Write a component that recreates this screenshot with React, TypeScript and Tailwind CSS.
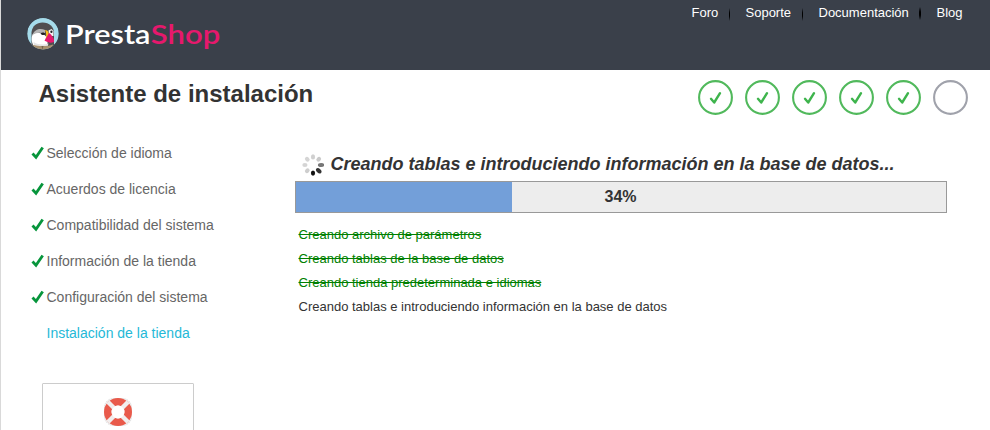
const links = [
  { label: "Foro", width: "w-[54px]" },
  { label: "Soporte", width: "w-[73px]" },
  { label: "Documentación", width: "w-[118px]" },
  { label: "Blog", width: "w-[53.500px]" },
];

const separators = [
  "",
  "mt-[2px] mr-[16px] ml-[-17px] w-px",
  "mt-[2px] mr-[16px] ml-[-17px] w-px",
  "mr-[16px] ml-[-18px] w-[2px]",
];

const menu = [
  "Selección de idioma",
  "Acuerdos de licencia",
  "Compatibilidad del sistema",
  "Información de la tienda",
  "Configuración del sistema",
  "Instalación de la tienda",
];

const done = [
  "Creando archivo de parámetros",
  "Creando tablas de la base de datos",
  "Creando tienda predeterminada e idiomas",
];

function Logo() {
  return (
    <svg width="210" height="56" viewBox="0 -10 210 56" className="block">
      <defs>
        <clipPath id="badge">
          <circle cx="16.500" cy="15.700" r="15.700" />
        </clipPath>
      </defs>
      <g clipPath="url(#badge)" transform="translate(-.5 0)">
        <circle cx="16.500" cy="15.700" r="16" fill="#a5dbea" />
        <path d="M5 27V14C6 8 10 4.500 16 4.500C23 4.500 27.500 9 27.500 15V29Z" fill="#504e50" />
        <path d="M7 28C5 24 4.500 20 6 16.500C9 14 14 14.500 18 17L21 20L21 27Z" fill="#fff" />
        <path d="M6 17C8 11 14 10 18.500 12L18.500 16C14 14 10 14.500 6 17Z" fill="#b5b5b5" />
        <path d="M22 12.500L25 11L27 13L27 18L23 18Z" fill="#f4f4f4" />
        <path d="M14 15.500C16 14 18 14.500 19 16C17.500 17.500 15.500 17.500 14 15.500Z" fill="#222" />
        <ellipse cx="24.900" cy="13.800" rx="1.100" ry="1.300" fill="#222" />
        <path d="M18.500 12C21.500 12 23 15 22 18L19 21.500C20 18 20 15 18.500 12Z" fill="#f6bd20" />
        <path d="M22.500 15C25.500 17 28 21 27.500 24C24 25.500 21.500 24.500 18 22.500Z" fill="#e6186d" />
        <path d="M7 24C12 27 18 27 22 25.500L21 29H8Z" fill="#e4e4e4" />
        <path d="M6 26.800C12 28.500 21 28.500 26.500 26.500L26 32H7Z" fill="#a99270" />
        <path d="M15 28L17 28L16 32Z" fill="#766650" />
      </g>
      <text x="38" y="25.500" fontFamily="Lato, sans-serif" fontWeight="600" fontSize="27.500" fill="#fff" textLength="85.500" lengthAdjust="spacingAndGlyphs">Presta</text>
      <text x="123.800" y="25.500" fontFamily="Lato, sans-serif" fontWeight="600" fontSize="27.500" fill="#e6186d" textLength="69.500" lengthAdjust="spacingAndGlyphs">Shop</text>
    </svg>
  );
}

function Step({ active }: { active: boolean }) {
  return (
    <svg width="35" height="35" viewBox="0 0 35 35">
      <circle cx="17.500" cy="17.500" r="16.400" fill="none" stroke={active ? "#51b95c" : "#a0a2ab"} strokeWidth="2.100" />
      {active && <path d="M13 18.800L16.200 22.500L22 13.200" fill="none" stroke="#3eb44c" strokeWidth="2.400" strokeLinecap="round" strokeLinejoin="round" />}
    </svg>
  );
}

const dots = ["#d0d0d0", "#cacaca", "#777", "#333", "#111", "#cecece", "#d5d5d5", "#d5d5d5"];

function Spinner() {
  return (
    <svg width="22" height="22" viewBox="0 0 22 22" className="block">
      {dots.map((color, i) => (
        <ellipse key={i} cx="11" cy="2.900" rx="2.100" ry={i > 1 && i < 4 ? 3.200 : 2.600} fill={color} transform={`rotate(${i * 45} 11 11)`} />
      ))}
    </svg>
  );
}

function Lifebuoy() {
  return (
    <svg width="28" height="28" viewBox="0 0 28 28">
      <rect x=".5" y=".5" width="27" height="27" rx="9" fill="#f3f3f3" stroke="#d4d4d4" strokeDasharray="1 1" />
      <circle cx="14" cy="14" r="10.200" fill="none" stroke="#e95a4b" strokeWidth="7.600" />
      <path d="M4 4L10 10M24 4L18 10M4 24L10 18M24 24L18 18" stroke="#f1eeee" strokeWidth="4.400" />
      <circle cx="14" cy="14" r="6.500" fill="#fff" />
    </svg>
  );
}

export default function App() {
  return (
    <div className="flex h-[430px] w-[990px] flex-col overflow-hidden border-l border-[#d9d9d9] bg-white font-['Liberation_Sans',Arial,sans-serif] text-[#333]">
      <header className="flex h-[70px] shrink-0 justify-between bg-[#3a404a]">
        <div className="pt-[8px] pl-[25.500px]">
          <Logo />
        </div>
        <nav className="flex h-[26px] items-center text-[13px] text-white">
          {links.map((l, i) => (
            <div key={l.label} className="flex items-center">
              {i > 0 && <span className={`h-[13px] bg-linear-to-b from-[#3a404a] via-black to-[#3a404a] ${separators[i]}`} />}
              <span className={l.width}>{l.label}</span>
            </div>
          ))}
        </nav>
      </header>

      <div className="flex h-[64px] shrink-0 justify-between pr-[22px] pl-[37.500px]">
        <h1 className="pt-[6px] text-[24px] leading-[36px] font-bold">Asistente de instalación</h1>
        <div className="flex gap-3 pt-[10px]">
          {[0, 1, 2, 3, 4, 5].map((n) => (
            <Step key={n} active={n < 5} />
          ))}
        </div>
      </div>

      <div className="flex">
        <aside className="w-[294px] shrink-0 pt-px pl-[30px]">
          <ul className="text-[14px] leading-[36px] text-[#666]">
            {menu.map((item, i) => (
              <li key={item} className={`flex h-9 items-center ${i === 5 ? "text-[#25b9d7]" : ""}`}>
                <span className="w-[15.500px]">
                  {i < 5 && (
                    <svg width="13" height="14" viewBox="0 0 13 14" className="block">
                      <path d="M1.500 7.500L5 11.300L11.700 1.500" fill="none" stroke="#07953c" strokeWidth="2.800" />
                    </svg>
                  )}
                </span>
                {item}
              </li>
            ))}
          </ul>
          <div className="mt-[32px] ml-[11px] flex h-[100px] w-[152px] justify-center rounded-[1px] border border-[#ccc] pt-[14px]">
            <Lifebuoy />
          </div>
        </aside>

        <main className="w-[652px]">
          <div className="flex h-[47px] pl-[7px]">
            <div className="pt-[20px]">
              <Spinner />
            </div>
            <h2 className="ml-[6.500px] pt-[18px] text-[18px] leading-6 font-bold whitespace-nowrap italic">
              Creando tablas e introduciendo información en la base de datos...
            </h2>
          </div>
          <div className="grid h-8 border border-[#999] bg-[#ededed]">
            <div className="col-start-1 row-start-1 w-[216px] bg-[#739fd9]" />
            <div className="col-start-1 row-start-1 pr-px text-center text-[16px] leading-[30px] font-bold">34%</div>
          </div>
          <ul className="pt-[10px] pl-[3.500px] text-[13px] leading-6">
            {done.map((task) => (
              <li key={task} className="text-[#008000] line-through">{task}</li>
            ))}
            <li>Creando tablas e introduciendo información en la base de datos</li>
          </ul>
        </main>
      </div>
    </div>
  );
}
